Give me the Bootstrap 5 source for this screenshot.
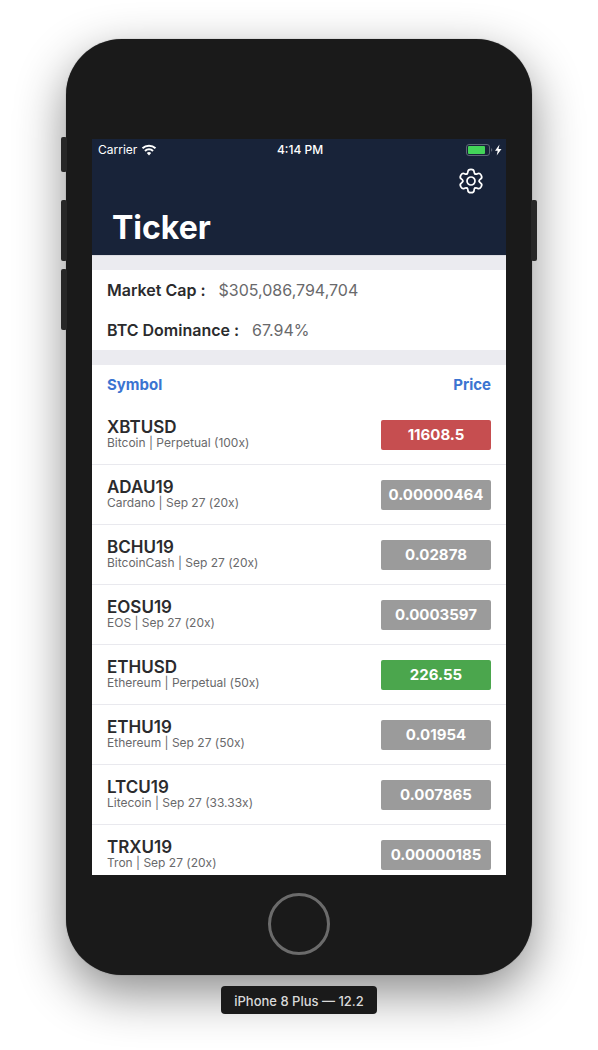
<!DOCTYPE html>
<html lang="en">
<head>
<meta charset="utf-8">
<meta name="viewport" content="width=device-width, initial-scale=1">
<title>Ticker</title>
<link href="https://cdn.jsdelivr.net/npm/bootstrap@5.3.0/dist/css/bootstrap.min.css" rel="stylesheet">
<style>
  body { font-family: Inter, "Liberation Sans", sans-serif; color: #2b2b2d; background: #fff; }
  .stage { padding: 39px 66px 36px; }
  .phone { max-width: 466px; padding: 100px 26px 20px; background: #1a1a1a; border-radius: 56px; box-shadow: 0 0 1px rgba(0,0,0,.5), 0 18px 50px rgba(0,0,0,.46); }
  .side-key { width: 6px; background: #272727; border-radius: 2px; height: 61px; }
  .key-left { left: -5px; }
  .key-right { right: -5px; }
  .key-mute { top: 98px; height: 35px; }
  .key-up { top: 161px; }
  .key-down { top: 230px; }
  .screen { aspect-ratio: 414 / 736; background: #fff; }
  .top-area { background: #182339; color: #fff; }
  .status { height: 20px; font-size: 12px; line-height: 20px; padding: 1px 4px 0 6px; }
  .status > * { flex: 1 1 0; }
  .nav-row { height: 44px; padding-right: 20px; }
  .gear { width: 30px; height: 30px; }
  .page-title { font-size: 32px; line-height: 42px; height: 52px; padding: 4px 20px; font-weight: 700; }
  .band { height: 15px; background: #ebebf0; }
  .band-top { border-top: 1px solid #dcdce2; }
  .stat { height: 40px; padding: 0 15px; font-size: 16px; gap: 13px; }
  .stat dt { font-weight: 600; }
  .stat dd { color: #69696b; }
  .ticker { border-collapse: separate; border-spacing: 0; }
  .ticker th, .ticker td { padding: 0 15px; vertical-align: middle; }
  .ticker thead th { height: 40px; font-size: 15px; font-weight: 700; color: #3b74d1; }
  .ticker tbody th, .ticker tbody td { height: 60px; border-bottom: 1px solid #e9e9ee; }
  .sym { font-size: 17px; line-height: 18px; font-weight: 600; }
  .sub { font-size: 12px; line-height: 14px; font-weight: 400; color: #69696b; padding-bottom: 1px; }
  .price { width: 110px; height: 30px; line-height: 30px; border-radius: 2px; background: #9b9b9b; color: #fff; font-size: 15px; font-weight: 700; text-align: center; }
  .price-down { background: #c64e50; }
  .price-up { background: #4ba64d; }
  .home { width: 62px; height: 62px; margin-top: 18px; border: 3px solid #6b6b6b; }
  .device-name { margin-top: 11px; padding: 0 13px; height: 28px; line-height: 30px; border-radius: 4px; background: #1a1a1a; color: #d9d9d9; font-size: 13px; font-weight: 500; }
</style>
</head>
<body>
<main class="stage d-flex flex-column align-items-center">
  <div class="phone position-relative w-100 d-flex flex-column align-items-center">
    <span class="side-key key-left key-mute position-absolute"></span>
    <span class="side-key key-left key-up position-absolute"></span>
    <span class="side-key key-left key-down position-absolute"></span>
    <span class="side-key key-right key-up position-absolute"></span>

    <div class="screen w-100 overflow-hidden">
      <header class="top-area">
        <div class="status d-flex align-items-center">
          <div class="d-flex align-items-center gap-1">
            <span>Carrier</span>
            <svg width="16" height="12" viewBox="0 0 16 12" fill="none" stroke="#fff" stroke-width="2" aria-hidden="true">
              <path d="M1.500 4.300a9.300 9.300 0 0 1 13 0M4 7a5.700 5.700 0 0 1 8 0"/>
              <path d="M8 11.400 5.800 9.100a3.200 3.200 0 0 1 4.400 0z" fill="#fff" stroke="none"/>
            </svg>
          </div>
          <div class="text-center fw-medium">4:14 PM</div>
          <div class="d-flex align-items-center justify-content-end">
            <svg width="36" height="12" viewBox="0 0 36 12" aria-hidden="true">
              <rect x=".5" y=".5" width="23" height="11" rx="2.500" fill="none" stroke="#5d6676"/>
              <rect x="2" y="2" width="17" height="8" rx="1" fill="#43d459"/>
              <path d="M25 4.300q1.300.3 1.300 1.700T25 7.700z" fill="#5d6676"/>
              <path d="M33.500.5 29 6.800h2.700L30.700 11.500 35.500 5h-3z" fill="#fff"/>
            </svg>
          </div>
        </div>
        <div class="nav-row d-flex align-items-center justify-content-end">
          <button type="button" class="gear btn p-0 border-0 d-flex align-items-center justify-content-center" aria-label="Settings">
            <svg width="28" height="28" viewBox="-14 -14 28 28" fill="none" stroke="#fff" stroke-width="1.700" stroke-linecap="round">
              <defs><path id="tooth" d="M-4.100-7.100C-3.400-7.500-3.100-8-3.100-9.200C-3.100-10.900-2-11.700 0-11.700S3.100-10.900 3.100-9.200C3.100-8 3.400-7.500 4.100-7.100"/></defs>
              <use href="#tooth"/>
              <use href="#tooth" transform="rotate(60)"/>
              <use href="#tooth" transform="rotate(120)"/>
              <use href="#tooth" transform="rotate(180)"/>
              <use href="#tooth" transform="rotate(240)"/>
              <use href="#tooth" transform="rotate(300)"/>
              <circle r="4"/>
            </svg>
          </button>
        </div>
        <h1 class="page-title m-0">Ticker</h1>
      </header>

      <div class="band band-top"></div>
      <dl class="m-0">
        <div class="stat d-flex align-items-center"><dt>Market Cap :</dt><dd class="m-0">$305,086,794,704</dd></div>
        <div class="stat d-flex align-items-center"><dt>BTC Dominance :</dt><dd class="m-0">67.94%</dd></div>
      </dl>
      <div class="band"></div>

      <table class="ticker w-100">
        <thead><tr><th scope="col">Symbol</th><th scope="col" class="text-end">Price</th></tr></thead>
        <tbody>
          <tr><th scope="row"><div class="sym">XBTUSD</div><div class="sub">Bitcoin | Perpetual (100x)</div></th><td><div class="price price-down ms-auto">11608.5</div></td></tr>
          <tr><th scope="row"><div class="sym">ADAU19</div><div class="sub">Cardano | Sep 27 (20x)</div></th><td><div class="price ms-auto">0.00000464</div></td></tr>
          <tr><th scope="row"><div class="sym">BCHU19</div><div class="sub">BitcoinCash | Sep 27 (20x)</div></th><td><div class="price ms-auto">0.02878</div></td></tr>
          <tr><th scope="row"><div class="sym">EOSU19</div><div class="sub">EOS | Sep 27 (20x)</div></th><td><div class="price ms-auto">0.0003597</div></td></tr>
          <tr><th scope="row"><div class="sym">ETHUSD</div><div class="sub">Ethereum | Perpetual (50x)</div></th><td><div class="price price-up ms-auto">226.55</div></td></tr>
          <tr><th scope="row"><div class="sym">ETHU19</div><div class="sub">Ethereum | Sep 27 (50x)</div></th><td><div class="price ms-auto">0.01954</div></td></tr>
          <tr><th scope="row"><div class="sym">LTCU19</div><div class="sub">Litecoin | Sep 27 (33.33x)</div></th><td><div class="price ms-auto">0.007865</div></td></tr>
          <tr><th scope="row"><div class="sym">TRXU19</div><div class="sub">Tron | Sep 27 (20x)</div></th><td><div class="price ms-auto">0.00000185</div></td></tr>
        </tbody>
      </table>
    </div>

    <button type="button" class="home btn p-0 rounded-circle" aria-label="Home"></button>
  </div>
  <div class="device-name position-relative">iPhone 8 Plus — 12.2</div>
</main>
<script src="https://cdn.jsdelivr.net/npm/bootstrap@5.3.0/dist/js/bootstrap.bundle.min.js"></script>
</body>
</html>
